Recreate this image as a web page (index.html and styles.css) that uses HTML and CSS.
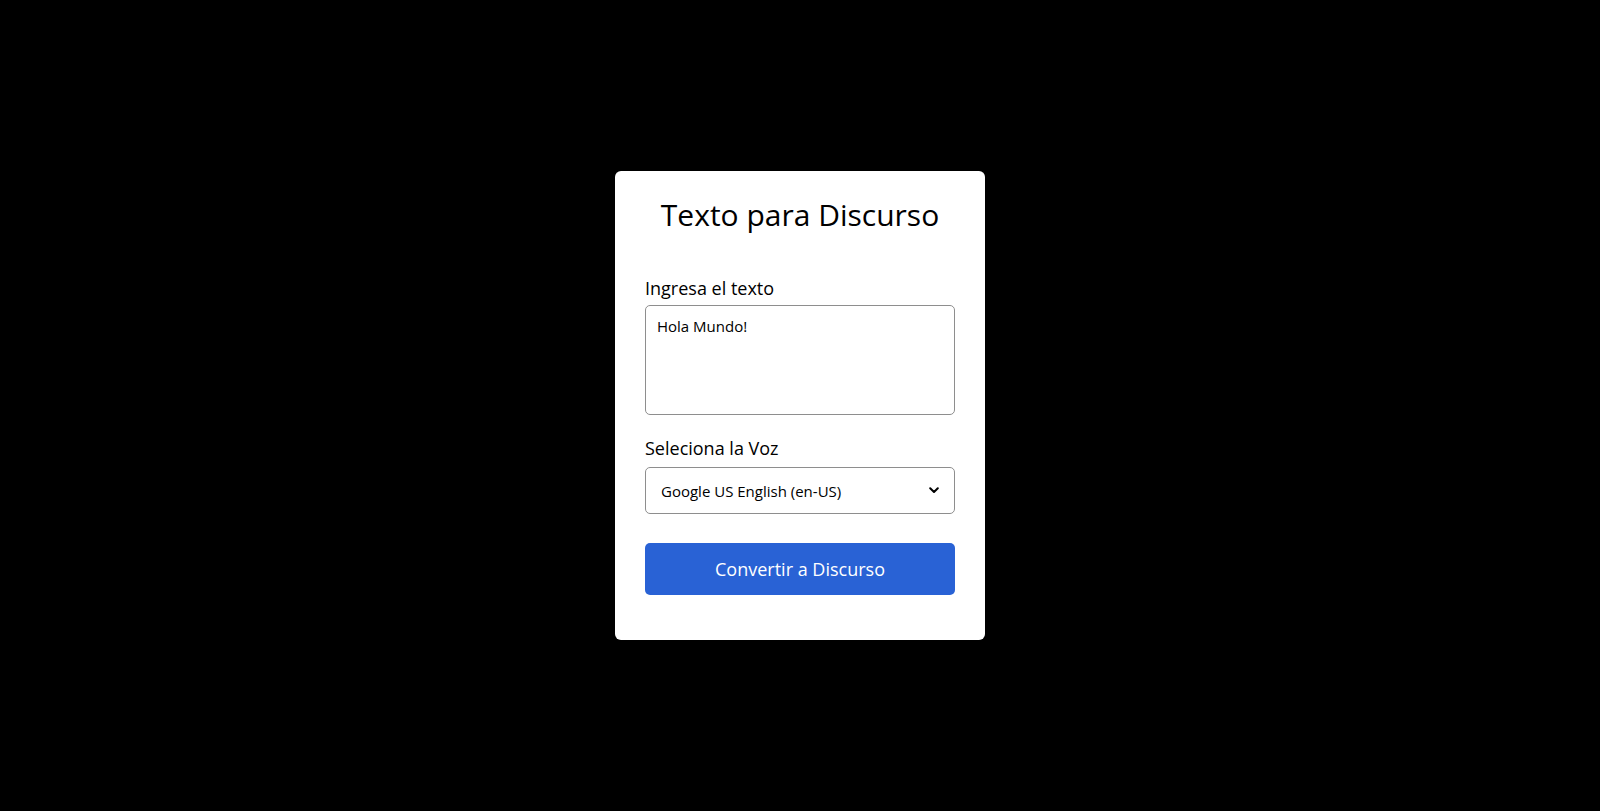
FILE: index.html
```html
<!DOCTYPE html>
<html lang="es">
<head>
<meta charset="utf-8">
<title>Texto para Discurso</title>
<link rel="stylesheet" href="styles.css">
</head>
<body>
<main class="card">
  <h1 class="title">Texto para Discurso</h1>
  <label class="label" for="text">Ingresa el texto</label>
  <textarea id="text" class="textarea">Hola Mundo!</textarea>
  <label class="label label-voice" for="voice">Seleciona la Voz</label>
  <div class="select-wrap">
    <select id="voice" class="select">
      <option>Google US English (en-US)</option>
    </select>
    <svg class="chevron" width="10" height="7" viewBox="0 0 10 7" aria-hidden="true"><path d="M1.2 1.2 L5 5 L8.8 1.2" fill="none" stroke="#000" stroke-width="2" stroke-linecap="round" stroke-linejoin="round"/></svg>
  </div>
  <button class="button" type="button">Convertir a Discurso</button>
</main>
</body>
</html>
```
FILE: styles.css
```css
* { box-sizing: border-box; }
html, body { height: 100%; }
body {
  margin: 0;
  background: #000;
  display: flex;
  align-items: center;
  justify-content: center;
  font-family: "Open Sans", "Noto Sans", sans-serif;
  color: #000;
}
.card {
  width: 370px;
  height: 469px;
  background: #fff;
  border-radius: 6px;
  padding: 26px 30px 45px;
  display: flex;
  flex-direction: column;
}
.title {
  margin: 0 0 43px;
  font-size: 30px;
  font-weight: 400;
  line-height: 36px;
  text-align: center;
}
.label {
  display: block;
  font-size: 18px;
  line-height: 22px;
  margin-top: 1px;
  margin-bottom: 6px;
}
.label-voice { margin-top: 22px; margin-bottom: 8px; }
.textarea {
  width: 100%;
  height: 110px;
  border: 1px solid #8e8e8e;
  border-radius: 5px;
  padding: 10px 11px;
  font-family: inherit;
  font-size: 15px;
  line-height: 21px;
  color: #000;
  resize: none;
  outline: none;
}
.select-wrap { position: relative; }
.select {
  appearance: none;
  -webkit-appearance: none;
  width: 100%;
  height: 47px;
  border: 1px solid #8e8e8e;
  border-radius: 5px;
  padding: 0 15px;
  background: #fff;
  font-family: inherit;
  font-size: 15px;
  color: #000;
  outline: none;
}
.chevron {
  position: absolute;
  right: 16px;
  top: 20px;
  pointer-events: none;
}
.button {
  margin-top: 29px;
  height: 52px;
  width: 100%;
  border: none;
  border-radius: 5px;
  background: #2962d5;
  color: #fff;
  font-family: inherit;
  font-size: 18px;
}
```
